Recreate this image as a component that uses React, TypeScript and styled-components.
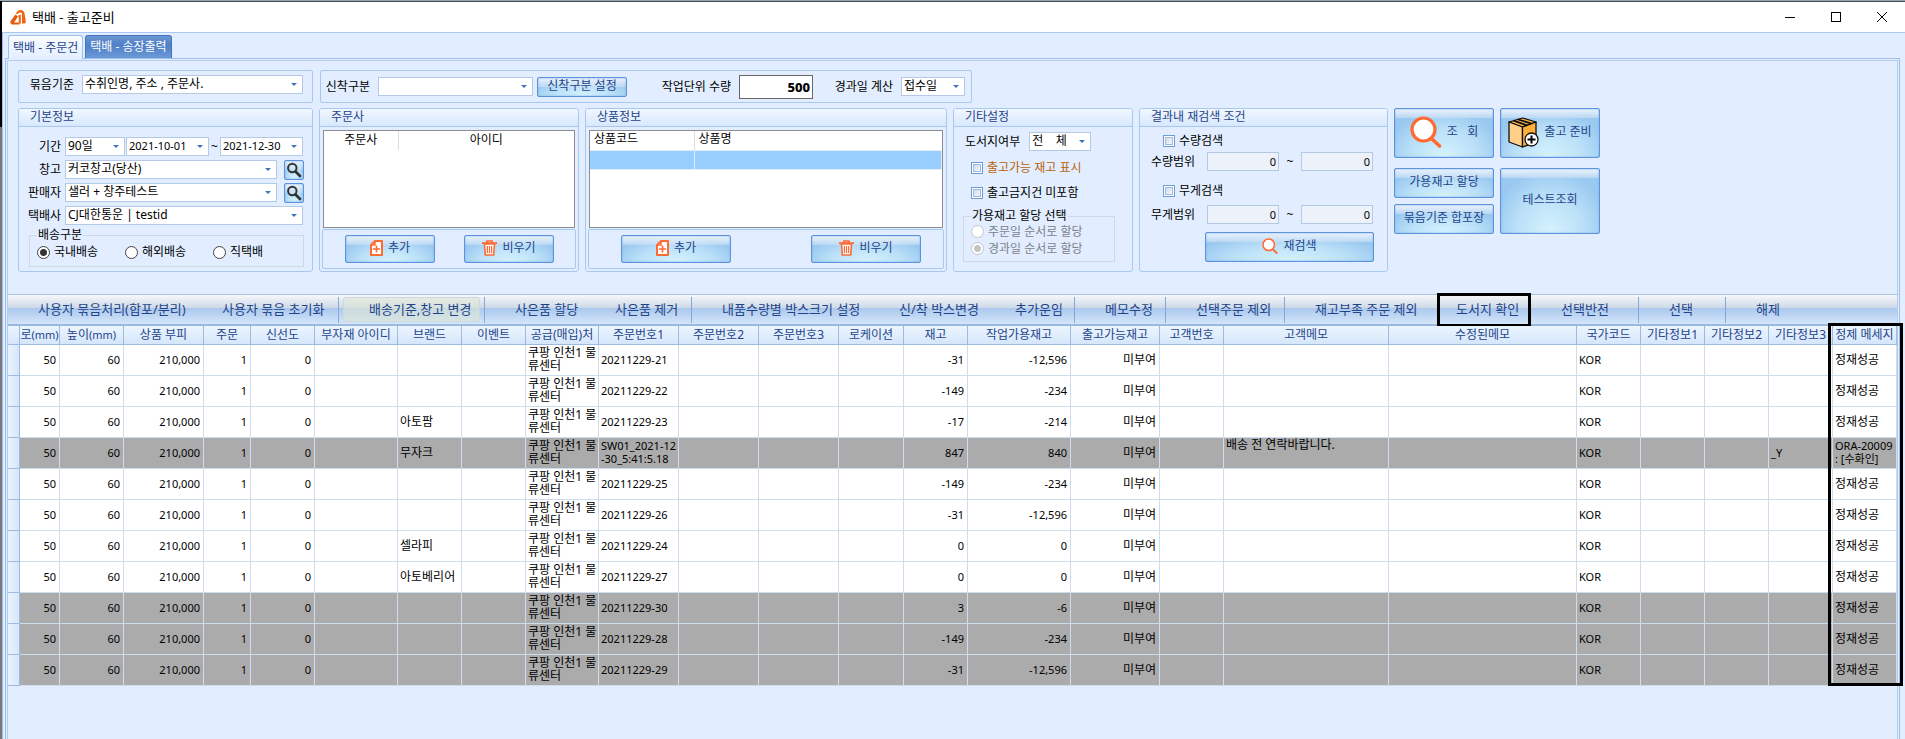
import React from "react";
import styled, { createGlobalStyle, css } from "styled-components";

const color = {
  surface: "#e2eeff",
  line: "#a9c8f0",
  frame: "#9dbfee",
  field: "#b4c9e6",
  navy: "#1e4489",
  orange: "#ff6a33",
};

const GlobalStyle = createGlobalStyle`
  *, *::before, *::after { box-sizing: border-box; }
  body {
    margin: 0;
    background: ${color.surface};
    color: #000;
    font: 12px/14px "Noto Sans", "Noto Sans CJK KR", sans-serif;
  }
  button, input, select { font: inherit; color: inherit; margin: 0; }
  button { cursor: pointer; }
`;

/* ---------- window frame ---------- */

const Window = styled.div`
  min-height: 100vh;
  display: flex;
  flex-direction: column;
  border-top: 1px solid #9aa6b4;
  background: linear-gradient(#000 126px, #77797d 126px);
  padding-left: 2px;
`;

const TitleBar = styled.header`
  height: 31px;
  flex: none;
  display: flex;
  align-items: center;
  border-top: 1px solid #474b52;
  background: #fff;
  padding: 0 0 1px 8px;
`;

const Title = styled.h1`
  flex: 1;
  margin: 0 0 0 6px;
  font-size: 13px;
  font-weight: 400;
  line-height: 18px;
`;

const WindowButton = styled.button`
  width: 46px;
  height: 28px;
  padding: 0;
  border: 0;
  background: none;
  display: grid;
  place-items: center;
`;

const Body = styled.div`
  flex: 1;
  display: flex;
  flex-direction: column;
  border-top: 1px solid ${color.line};
  border-left: 1px solid ${color.frame};
  background: ${color.surface};
  padding: 2px 5px 0 2px;
`;

const Tabs = styled.nav`
  display: flex;
  align-items: flex-end;
  gap: 2px;
  padding-left: 3px;
`;

const Tab = styled.button<{ $active?: boolean }>`
  height: 23px;
  padding: 0 4px;
  border: 1px solid #4474bd;
  border-bottom: 0;
  border-radius: 3px 3px 0 0;
  color: #fff;
  background: linear-gradient(#6f97d2, #4f7fc6 40%, #6c9ad8);
  white-space: nowrap;
  ${(p) =>
    p.$active &&
    css`
      height: 24px;
      margin-bottom: -1px;
      border-color: ${color.frame};
      color: ${color.navy};
      background: linear-gradient(#fbfdff, ${color.surface});
      z-index: 1;
    `}
`;

const Page = styled.main`
  flex: 1;
  display: flex;
  border: 1px solid ${color.frame};
  border-bottom: 0;
  padding: 1px 1px 0;
`;

const PageInner = styled.div`
  flex: 1;
  min-width: 0;
  border: 1px solid #b5cbea;
  border-bottom: 0;
`;

/* ---------- filter area ---------- */

const Filters = styled.section`
  display: flex;
  flex-direction: column;
  gap: 5px;
  padding: 9px 10px 22px;
  border-bottom: 1px solid #a8c3e6;
`;

const FilterRow = styled.div<{ $gap: number }>`
  display: flex;
  align-items: flex-start;
  gap: ${(p) => p.$gap}px;
`;

const Bar = styled.div<{ $width: number; $raised?: boolean }>`
  width: ${(p) => p.$width}px;
  height: 33px;
  flex: none;
  display: flex;
  align-items: center;
  padding-bottom: ${(p) => (p.$raised ? 4 : 0)}px;
  border: 1px solid ${color.line};
  border-radius: 2px;
  white-space: nowrap;
`;

const BarLabel = styled.label<{ $width: number }>`
  width: ${(p) => p.$width}px;
  padding-right: 8px;
  text-align: right;
`;

const GroupBox = styled.section<{ $width: number }>`
  width: ${(p) => p.$width}px;
  height: 164px;
  flex: none;
  border: 1px solid ${color.line};
  border-radius: 3px;
  white-space: nowrap;
`;

const GroupTitle = styled.h2`
  height: 18px;
  margin: 0;
  padding-left: 11px;
  border-bottom: 1px solid ${color.line};
  border-radius: 2px 2px 0 0;
  background: linear-gradient(#f1f7ff, #d7e8fd);
  color: ${color.navy};
  font-size: 12px;
  font-weight: 400;
  line-height: 15px;
`;

const SelectBox = styled.span<{ $width: number }>`
  position: relative;
  display: block;
  flex: none;
  width: ${(p) => p.$width}px;
  &::after {
    content: "";
    position: absolute;
    right: 6px;
    top: 8px;
    border: 3px solid transparent;
    border-top-color: #3d74bd;
    border-bottom: 0;
    pointer-events: none;
  }
`;

const Select = styled.select<{ $digits?: boolean }>`
  appearance: none;
  display: block;
  width: 100%;
  height: 19px;
  padding: 0 0 1px 2px;
  border: 1px solid ${color.field};
  border-radius: 0;
  background: #fff;
  font-size: ${(p) => (p.$digits ? 11 : 12)}px;
  line-height: 16px;
`;

const Fields = styled.div`
  display: flex;
  flex-direction: column;
  gap: 4px;
  padding-top: 10px;
`;

const Field = styled.div`
  display: flex;
  align-items: center;
  height: 19px;
`;

const FieldLabel = styled.label`
  width: 46px;
  padding-right: 4px;
  text-align: right;
`;

const Tilde = styled.span<{ $width: number }>`
  width: ${(p) => p.$width}px;
  text-align: center;
`;

const glossy = css`
  border: 1px solid #5b94dc;
  border-radius: 2px;
  color: ${color.navy};
  background:
    linear-gradient(rgba(240, 246, 253, 0.95), rgba(205, 224, 244, 0.6)) 0 0 / 100% 9px no-repeat,
    radial-gradient(ellipse 60% 100% at 50% 100%, #d6f3fd, #b9dff8 60%, #99c8f0);
  box-shadow: inset 0 0 2px #79abe4;
`;

const Button = styled.button<{ $width: number; $height: number }>`
  ${glossy}
  width: ${(p) => p.$width}px;
  height: ${(p) => p.$height}px;
  flex: none;
  padding: 0 0 2px;
  display: flex;
  align-items: center;
  justify-content: center;
  gap: 5px;
  white-space: pre;
`;

const LookupButton = styled.button`
  ${glossy}
  width: 20px;
  height: 20px;
  margin-left: 7px;
  padding: 0;
  display: grid;
  place-items: center;
`;

const OptionSet = styled.fieldset<{ $column?: boolean }>`
  display: flex;
  flex-direction: ${(p) => (p.$column ? "column" : "row")};
  min-width: 0;
  border: 1px solid #cfd9e6;
  margin: ${(p) => (p.$column ? "7px 8px 0 0" : "3px 8px 0 10px")};
  padding: ${(p) => (p.$column ? "0 7px 4px" : "3px 7px 7px")};
  legend {
    padding: 0 1px;
    line-height: 14px;
  }
`;

const Option = styled.label<{ $width?: number; $height: number; $muted?: boolean }>`
  width: ${(p) => (p.$width ? p.$width + "px" : "auto")};
  height: ${(p) => p.$height}px;
  display: flex;
  align-items: center;
  gap: 4px;
  color: ${(p) => (p.$muted ? "#7d828a" : "#000")};
`;

const Radio = styled.input`
  appearance: none;
  width: 13px;
  height: 13px;
  border: 1px solid #444;
  border-radius: 50%;
  background: #fff;
  &:checked {
    background: radial-gradient(circle, #333 3px, #fff 4px);
  }
  &:disabled {
    border-color: #c3c6ca;
  }
  &:disabled:checked {
    background: radial-gradient(circle, #c4c4c4 3px, #fff 4px);
  }
`;

const CheckRow = styled.label<{ $accent?: boolean }>`
  height: 18px;
  display: flex;
  align-items: center;
  gap: 4px;
  color: ${(p) => (p.$accent ? "#b8620a" : "#000")};
`;

const Checkbox = styled.input`
  appearance: none;
  width: 12px;
  height: 12px;
  border: 1px solid #6c9bd6;
  background: linear-gradient(135deg, #c3d3e8, #fff);
  box-shadow: inset 0 0 0 1px #fff, inset 0 0 0 2px #a3bade;
`;

const BatchInput = styled.input`
  width: 74px;
  height: 24px;
  margin-right: 4px;
  padding: 0 2px;
  border: 1px solid #666;
  background: #fff;
  font-size: 13px;
  font-weight: 800;
  text-align: right;
`;

const RangeInput = styled.input`
  width: 72px;
  height: 19px;
  padding: 0 2px;
  border: 1px solid ${color.field};
  background: #ecf1fa;
  font-size: 11px;
  text-align: right;
`;

const ListFrame = styled.div`
  height: 98px;
  margin: 3px 3px 1px;
  border: 1px solid #8a8d92;
  background: #fff;
`;

const ListTable = styled.table<{ $align: "center" | "left" }>`
  width: 100%;
  table-layout: fixed;
  border-collapse: collapse;
  th {
    height: 19px;
    padding: 0 4px 2px;
    border-right: 1px solid #d9dde3;
    font-weight: 400;
    text-align: ${(p) => p.$align};
  }
  th:last-child { border-right: 0; }
  td {
    height: 19px;
    padding: 0;
    border: 1px solid #e3ebf3;
    border-left: 0;
    background: #99cfff;
  }
`;

const ListActions = styled.div<{ $inset: number; $gap: number }>`
  display: flex;
  gap: ${(p) => p.$gap}px;
  height: 40px;
  margin: 0 2px;
  padding: 5px 0 0 ${(p) => p.$inset}px;
  border: 1px solid ${color.line};
  border-radius: 2px;
`;

const MiscBody = styled.div`
  display: flex;
  flex-direction: column;
  padding: 5px 9px 0;
`;

const MiscRow = styled.div`
  display: flex;
  align-items: center;
  gap: 9px;
  padding-left: 2px;
`;

const MiscChecks = styled.div`
  display: grid;
  gap: 7px;
  padding: 8px 0 0 8px;
`;

const SearchBody = styled.div`
  padding: 5px 11px 0;
`;

const SearchCheck = styled.div`
  padding-left: 12px;
`;

const RangeRow = styled.div<{ $top: number; $bottom: number }>`
  display: flex;
  align-items: center;
  padding: ${(p) => p.$top}px 0 ${(p) => p.$bottom}px;
  label { width: 56px; }
`;

const SearchAction = styled.div`
  padding-left: 54px;
`;

const ActionColumns = styled.div`
  display: grid;
  gap: 10px;
`;

const ActionTop = styled.div`
  display: flex;
  gap: 6px;
`;

const ActionStack = styled.div`
  display: grid;
  gap: 6px;
`;

/* ---------- command bar ---------- */

const CommandBar = styled.div`
  display: flex;
  height: 31px;
  border-bottom: 2px solid #9bb9de;
  background: linear-gradient(#f7f8fa, #ced9e8 44%, #abc8ed 46%, #d5e6fb);
`;

const CommandSlot = styled.div<{ $width: number; $divided?: boolean }>`
  position: relative;
  display: flex;
  flex: none;
  width: ${(p) => p.$width}px;
  ${(p) =>
    p.$divided &&
    css`
      &::after {
        content: "";
        width: 1px;
        margin: 2px 0 1px;
        background: #86a8d4;
      }
    `}
`;

const Command = styled.button<{ $hot?: boolean }>`
  flex: 1;
  padding: 0 0 2px 30px;
  border: 0;
  background: none;
  color: ${color.navy};
  font-size: 13px;
  line-height: 18px;
  text-align: left;
  white-space: nowrap;
  ${(p) =>
    p.$hot &&
    css`
      margin: 2px 4px;
      padding-left: 25px;
      border: 1px solid #ccd8dc;
      border-radius: 3px;
      background: rgba(222, 230, 214, 0.6);
    `}
`;

const Callout = styled.span`
  position: absolute;
  inset: -2px 0 -3px 11px;
  border: 3px solid #000;
  pointer-events: none;
`;

/* ---------- order grid ---------- */

const GridWrap = styled.div`
  position: relative;
`;

const ColumnCallout = styled.span`
  position: absolute;
  top: -3px;
  right: -6px;
  bottom: 0;
  width: 75px;
  border: 3px solid #000;
  pointer-events: none;
`;

const Grid = styled.table`
  width: 100%;
  table-layout: fixed;
  border-collapse: separate;
  border-spacing: 0;
`;

const HeadCell = styled.th`
  height: 19px;
  padding: 0 0 1px;
  border-right: 1px solid #9ebadf;
  border-bottom: 1px solid #9ebadf;
  background: linear-gradient(#ecf5ff, #d5e6fb);
  color: ${color.navy};
  font-weight: 400;
  line-height: 14px;
  white-space: nowrap;
`;

const Unit = styled.span`
  font-size: 11px;
`;

const RowMarker = styled.th`
  border-right: 1px solid #9ebadf;
  border-bottom: 1px solid #9ebadf;
  background: linear-gradient(90deg, #eaf3fe, #d5e6fb);
`;

const Row = styled.tr<{ $held?: boolean }>`
  background: ${(p) => (p.$held ? "#ababab" : "#fff")};
`;

const Cell = styled.td<{ $end?: boolean; $latin?: boolean; $top?: boolean }>`
  height: 31px;
  padding: 0 ${(p) => (p.$end ? 3 : 0)}px 2px 2px;
  border-right: 1px solid #cddcee;
  border-bottom: 1px solid #cddcee;
  font-size: ${(p) => (p.$latin ? 11 : 12)}px;
  line-height: 13px;
  text-align: ${(p) => (p.$end ? "right" : "left")};
  vertical-align: ${(p) => (p.$top ? "top" : "middle")};
  word-break: break-all;
`;

/* ---------- icons ---------- */

const LogoIcon = () => (
  <svg width="16" height="16" viewBox="0 0 16 16" aria-hidden="true">
    <path d="M6 4.500C7 1.500 9.500 0.300 12 1.200C14 2 14.600 4 14.900 6.500L15.800 12.500A1.800 1.800 0 0 1 14 14.500H12V4.500C10.500 3 8.500 3.500 7.500 5.200Z" fill="#f0660f" />
    <path d="M5.500 5.500 0.800 11.800C-0.200 13.500 0.800 15.500 2.800 15.500H9.500V13.500H4L8 7.500Z" fill="#e85a08" />
    <path d="M8.200 6.500 10.800 5.500V14.500H8.800V9Z" fill="#f0660f" />
  </svg>
);

const LensIcon = ({ size }: { size: number }) => (
  <svg width={size} height={size} viewBox="0 0 32 32" aria-hidden="true">
    <path d="M21 22 29.500 30" stroke={color.orange} strokeWidth="3.600" strokeLinecap="round" />
    <circle cx="13.500" cy="13.500" r="11.500" fill="#fff" stroke={color.orange} strokeWidth="3.200" />
  </svg>
);

const LookupIcon = () => (
  <svg width="16" height="16" viewBox="0 0 16 16" aria-hidden="true">
    <path d="M9.500 9.500 14 14" stroke="#333" strokeWidth="2.800" strokeLinecap="round" />
    <circle cx="6.300" cy="6" r="4.200" fill="none" stroke="#333" strokeWidth="2" />
  </svg>
);

const AddIcon = () => (
  <svg width="13" height="16" viewBox="0 0 13 16" aria-hidden="true">
    <path d="M5 1H12V15H1V5Z" fill="#fff" stroke={color.orange} strokeWidth="2" strokeLinejoin="round" />
    <path d="M1 5H5V1" fill="none" stroke={color.orange} strokeWidth="1.500" />
    <path d="M6.500 5.500V12.500M3 9H10" stroke={color.orange} strokeWidth="1.600" />
  </svg>
);

const TrashIcon = () => (
  <svg width="15" height="16" viewBox="0 0 15 16" aria-hidden="true">
    <path d="M2.500 4H12.500L11.700 15H3.300Z" fill="#fff" stroke={color.orange} strokeWidth="1.600" />
    <path d="M0 3.200H15M5 2.800V1H10V2.800" fill="none" stroke={color.orange} strokeWidth="1.700" />
    <path d="M5.400 6V13M7.500 6V13M9.600 6V13" stroke={color.orange} strokeWidth="1.200" />
  </svg>
);

const ParcelIcon = () => (
  <svg width="31" height="31" viewBox="0 0 31 31" aria-hidden="true">
    <g stroke="#111" strokeWidth="1.300" strokeLinejoin="round">
      <path d="M1 5 14.500 1 28 5 14.500 10Z" fill="#ffb84d" />
      <path d="M1 5 14.500 10V30L1 25Z" fill="#ffd08a" />
      <path d="M28 5 14.500 10V30L28 25Z" fill="#ffb03b" />
      <path d="M5.500 3.700 19 8.300M10 2.300 23.500 6.600" fill="none" strokeWidth="1.800" />
      <circle cx="23.500" cy="22.500" r="6.500" fill="#fff" />
    </g>
    <path d="M23.500 18.500V26.500M19.500 22.500H27.500" stroke="#000" strokeWidth="2" />
  </svg>
);

/* ---------- data ---------- */

const commands = [
  { text: "사용자 묶음처리(합포/분리)", width: 184 },
  { text: "사용자 묶음 초기화", width: 147, divided: true },
  { text: "배송기준,창고 변경", width: 146, divided: true, hot: true },
  { text: "사은품 할당", width: 100 },
  { text: "사은품 제거", width: 107, divided: true },
  { text: "내품수량별 박스크기 설정", width: 177 },
  { text: "신/착 박스변경", width: 116 },
  { text: "추가운임", width: 90, divided: true },
  { text: "메모수정", width: 91, divided: true },
  { text: "선택주문 제외", width: 119, divided: true },
  { text: "재고부족 주문 제외", width: 141 },
  { text: "도서지 확인", width: 105, divided: true, callout: true },
  { text: "선택반전", width: 108, divided: true },
  { text: "선택", width: 87, divided: true },
  { text: "해제", width: 62 },
];

type Column = {
  key: string;
  label: string;
  unit?: string;
  width?: number;
  end?: boolean;
  latin?: boolean;
  top?: boolean;
};

const columns: Column[] = [
  { key: "length", label: "로", unit: "(mm)", width: 40, end: true, latin: true },
  { key: "height", label: "높이", unit: "(mm)", width: 64, end: true, latin: true },
  { key: "volume", label: "상품 부피", width: 80, end: true, latin: true },
  { key: "orders", label: "주문", width: 47, end: true, latin: true },
  { key: "fresh", label: "신선도", width: 64, end: true, latin: true },
  { key: "material", label: "부자재 아이디", width: 83 },
  { key: "brand", label: "브랜드", width: 64 },
  { key: "event", label: "이벤트", width: 64 },
  { key: "supplier", label: "공급(매입)처", width: 73 },
  { key: "no1", label: "주문번호1", width: 80, latin: true },
  { key: "no2", label: "주문번호2", width: 80 },
  { key: "no3", label: "주문번호3", width: 80 },
  { key: "location", label: "로케이션", width: 65 },
  { key: "stock", label: "재고", width: 64, end: true, latin: true },
  { key: "usable", label: "작업가용재고", width: 103, end: true, latin: true },
  { key: "ready", label: "출고가능재고", width: 89, end: true },
  { key: "customer", label: "고객번호", width: 64 },
  { key: "memo", label: "고객메모", width: 165, top: true },
  { key: "edited", label: "수정된메모" },
  { key: "country", label: "국가코드", width: 64, latin: true },
  { key: "etc1", label: "기타정보1", width: 64 },
  { key: "etc2", label: "기타정보2", width: 64 },
  { key: "etc3", label: "기타정보3", width: 64, latin: true },
  { key: "message", label: "정제 메세지", width: 64 },
];

const base = {
  length: "50",
  height: "60",
  volume: "210,000",
  orders: "1",
  fresh: "0",
  supplier: "쿠팡 인천1 물류센터",
  ready: "미부여",
  country: "KOR",
  message: "정재성공",
};

const rows: Array<Record<string, string> & { held?: string }> = [
  { ...base, no1: "20211229-21", stock: "-31", usable: "-12,596" },
  { ...base, no1: "20211229-22", stock: "-149", usable: "-234" },
  { ...base, no1: "20211229-23", stock: "-17", usable: "-214", brand: "아토팜" },
  {
    ...base,
    no1: "SW01_2021-12-30_5:41:5.18",
    stock: "847",
    usable: "840",
    brand: "무자크",
    memo: "배송 전 연락바랍니다.",
    etc3: "_Y",
    message: "ORA-20009 : [수화인]",
    held: "y",
  },
  { ...base, no1: "20211229-25", stock: "-149", usable: "-234" },
  { ...base, no1: "20211229-26", stock: "-31", usable: "-12,596" },
  { ...base, no1: "20211229-24", stock: "0", usable: "0", brand: "셀라피" },
  { ...base, no1: "20211229-27", stock: "0", usable: "0", brand: "아토베리어" },
  { ...base, no1: "20211229-30", stock: "3", usable: "-6", held: "y" },
  { ...base, no1: "20211229-28", stock: "-149", usable: "-234", held: "y" },
  { ...base, no1: "20211229-29", stock: "-31", usable: "-12,596", held: "y" },
];

/* ---------- parts ---------- */

type PickProps = { id: string; width: number; value: string; digits?: boolean; label?: string };

const Pick = ({ id, width, value, digits, label }: PickProps) => (
  <SelectBox $width={width}>
    <Select id={id} $digits={digits} aria-label={label}>
      <option>{value}</option>
    </Select>
  </SelectBox>
);

const AddAndClear = ({ width, inset, gap }: { width: number; inset: number; gap: number }) => (
  <ListActions $inset={inset} $gap={gap}>
    <Button type="button" $width={width} $height={28}>
      <AddIcon />
      추가
    </Button>
    <Button type="button" $width={width} $height={28}>
      <TrashIcon />
      비우기
    </Button>
  </ListActions>
);

const BasicInfo = () => (
  <GroupBox $width={295}>
    <GroupTitle>기본정보</GroupTitle>
    <Fields>
      <Field>
        <FieldLabel htmlFor="period">기간</FieldLabel>
        <Pick id="period" width={60} value="90일" />
        <Tilde $width={1} />
        <Pick id="from" width={83} value="2021-10-01" digits label="시작일" />
        <Tilde $width={11}>~</Tilde>
        <Pick id="to" width={83} value="2021-12-30" digits label="종료일" />
      </Field>
      <Field>
        <FieldLabel htmlFor="warehouse">창고</FieldLabel>
        <Pick id="warehouse" width={212} value="커코창고(당산)" />
        <LookupButton type="button" aria-label="창고 찾기">
          <LookupIcon />
        </LookupButton>
      </Field>
      <Field>
        <FieldLabel htmlFor="seller">판매자</FieldLabel>
        <Pick id="seller" width={212} value="샐러 + 창주테스트" />
        <LookupButton type="button" aria-label="판매자 찾기">
          <LookupIcon />
        </LookupButton>
      </Field>
      <Field>
        <FieldLabel htmlFor="courier">택배사</FieldLabel>
        <Pick id="courier" width={238} value="CJ대한통운 | testid" />
      </Field>
    </Fields>
    <OptionSet>
      <legend>배송구분</legend>
      {["국내배송", "해외배송", "직택배"].map((text, i) => (
        <Option key={text} $width={i < 2 ? 88 : undefined} $height={14}>
          <Radio type="radio" name="delivery" defaultChecked={i === 0} />
          {text}
        </Option>
      ))}
    </OptionSet>
  </GroupBox>
);

const OrderCompany = () => (
  <GroupBox $width={260}>
    <GroupTitle>주문사</GroupTitle>
    <ListFrame>
      <ListTable $align="center">
        <colgroup>
          <col width="74" />
          <col />
        </colgroup>
        <thead>
          <tr>
            <th>주문사</th>
            <th>아이디</th>
          </tr>
        </thead>
      </ListTable>
    </ListFrame>
    <AddAndClear width={90} inset={22} gap={29} />
  </GroupBox>
);

const ProductInfo = () => (
  <GroupBox $width={362}>
    <GroupTitle>상품정보</GroupTitle>
    <ListFrame>
      <ListTable $align="left">
        <colgroup>
          <col width="104" />
          <col />
        </colgroup>
        <thead>
          <tr>
            <th>상품코드</th>
            <th>상품명</th>
          </tr>
        </thead>
        <tbody>
          <tr>
            <td />
            <td />
          </tr>
        </tbody>
      </ListTable>
    </ListFrame>
    <AddAndClear width={110} inset={32} gap={80} />
  </GroupBox>
);

const MiscSettings = () => (
  <GroupBox $width={180}>
    <GroupTitle>기타설정</GroupTitle>
    <MiscBody>
      <MiscRow>
        <label htmlFor="island">도서지여부</label>
        <Pick id="island" width={62} value={"전\u00a0\u00a0\u00a0\u00a0체"} />
      </MiscRow>
      <MiscChecks>
        <CheckRow $accent>
          <Checkbox type="checkbox" />
          출고가능 재고 표시
        </CheckRow>
        <CheckRow>
          <Checkbox type="checkbox" />
          출고금지건 미포함
        </CheckRow>
      </MiscChecks>
      <OptionSet $column>
        <legend>가용재고 할당 선택</legend>
        <Option $height={17} $muted>
          <Radio type="radio" name="allocation" disabled />
          주문일 순서로 할당
        </Option>
        <Option $height={17} $muted>
          <Radio type="radio" name="allocation" disabled defaultChecked />
          경과일 순서로 할당
        </Option>
      </OptionSet>
    </MiscBody>
  </GroupBox>
);

const Range = ({ id, label, top, bottom }: { id: string; label: string; top: number; bottom: number }) => (
  <RangeRow $top={top} $bottom={bottom}>
    <label htmlFor={id}>{label}</label>
    <RangeInput id={id} defaultValue="0" />
    <Tilde $width={22}>~</Tilde>
    <RangeInput aria-label={label + " 끝"} defaultValue="0" />
  </RangeRow>
);

const RefineSearch = () => (
  <GroupBox $width={249}>
    <GroupTitle>결과내 재검색 조건</GroupTitle>
    <SearchBody>
      <SearchCheck>
        <CheckRow>
          <Checkbox type="checkbox" />
          수량검색
        </CheckRow>
      </SearchCheck>
      <Range id="quantity" label="수량범위" top={2} bottom={11} />
      <SearchCheck>
        <CheckRow>
          <Checkbox type="checkbox" />
          무게검색
        </CheckRow>
      </SearchCheck>
      <Range id="weight" label="무게범위" top={5} bottom={8} />
      <SearchAction>
        <Button type="button" $width={169} $height={30}>
          <LensIcon size={16} />
          재검색
        </Button>
      </SearchAction>
    </SearchBody>
  </GroupBox>
);

const MainActions = () => (
  <ActionColumns>
    <ActionTop>
      <Button type="button" $width={100} $height={50}>
        <LensIcon size={32} />
        {"조   회"}
      </Button>
      <Button type="button" $width={100} $height={50}>
        <ParcelIcon />
        출고 준비
      </Button>
    </ActionTop>
    <ActionTop>
      <ActionStack>
        <Button type="button" $width={100} $height={30}>
          가용재고 할당
        </Button>
        <Button type="button" $width={100} $height={30}>
          묶음기준 합포장
        </Button>
      </ActionStack>
      <Button type="button" $width={100} $height={66}>
        테스트조회
      </Button>
    </ActionTop>
  </ActionColumns>
);

const OrderGrid = () => (
  <GridWrap>
    <Grid>
      <colgroup>
        <col width="12" />
        {columns.map((c) => (
          <col key={c.key} width={c.width} />
        ))}
      </colgroup>
      <thead>
        <tr>
          <HeadCell aria-label="행" />
          {columns.map((c) => (
            <HeadCell key={c.key} scope="col">
              {c.label}
              {c.unit && <Unit>{c.unit}</Unit>}
            </HeadCell>
          ))}
        </tr>
      </thead>
      <tbody>
        {rows.map((row) => (
          <Row key={row.no1} $held={Boolean(row.held)}>
            <RowMarker scope="row" />
            {columns.map((c) => {
              const value = row[c.key] ?? "";
              return (
                <Cell key={c.key} $end={c.end} $top={c.top} $latin={c.latin || value.startsWith("ORA")}>
                  {value}
                </Cell>
              );
            })}
          </Row>
        ))}
      </tbody>
    </Grid>
    <ColumnCallout />
  </GridWrap>
);

export default function App() {
  return (
    <Window>
      <GlobalStyle />
      <TitleBar>
        <LogoIcon />
        <Title>택배 - 출고준비</Title>
        <WindowButton type="button" aria-label="최소화">
          <svg width="10" height="10" viewBox="0 0 10 10">
            <path d="M0 5.500H10" stroke="#000" />
          </svg>
        </WindowButton>
        <WindowButton type="button" aria-label="최대화">
          <svg width="10" height="10" viewBox="0 0 10 10">
            <rect x="0.500" y="0.500" width="9" height="9" fill="none" stroke="#000" />
          </svg>
        </WindowButton>
        <WindowButton type="button" aria-label="닫기">
          <svg width="10" height="10" viewBox="0 0 10 10">
            <path d="M0 0 10 10M10 0 0 10" stroke="#000" />
          </svg>
        </WindowButton>
      </TitleBar>
      <Body>
        <Tabs>
          <Tab type="button" $active>
            택배 - 주문건
          </Tab>
          <Tab type="button">택배 - 송장출력</Tab>
        </Tabs>
        <Page>
          <PageInner>
            <Filters>
              <FilterRow $gap={7}>
                <Bar $width={295} $raised>
                  <BarLabel htmlFor="bundle" $width={63}>
                    묶음기준
                  </BarLabel>
                  <Pick id="bundle" width={221} value="수취인명, 주소 , 주문사." />
                </Bar>
                <Bar $width={652}>
                  <BarLabel htmlFor="newType" $width={57}>
                    신착구분
                  </BarLabel>
                  <Pick id="newType" width={155} value="" />
                  <Tilde $width={4} />
                  <Button type="button" $width={90} $height={20}>
                    신착구분 설정
                  </Button>
                  <BarLabel htmlFor="batch" $width={112}>
                    작업단위 수량
                  </BarLabel>
                  <BatchInput id="batch" defaultValue="500" />
                  <BarLabel htmlFor="elapsed" $width={84}>
                    경과일 계산
                  </BarLabel>
                  <Pick id="elapsed" width={64} value="접수일" />
                </Bar>
              </FilterRow>
              <FilterRow $gap={6}>
                <BasicInfo />
                <OrderCompany />
                <ProductInfo />
                <MiscSettings />
                <RefineSearch />
                <MainActions />
              </FilterRow>
            </Filters>
            <CommandBar>
              {commands.map((c) => (
                <CommandSlot key={c.text} $width={c.width} $divided={c.divided}>
                  <Command type="button" $hot={c.hot}>
                    {c.text}
                  </Command>
                  {c.callout && <Callout />}
                </CommandSlot>
              ))}
            </CommandBar>
            <OrderGrid />
          </PageInner>
        </Page>
      </Body>
    </Window>
  );
}
